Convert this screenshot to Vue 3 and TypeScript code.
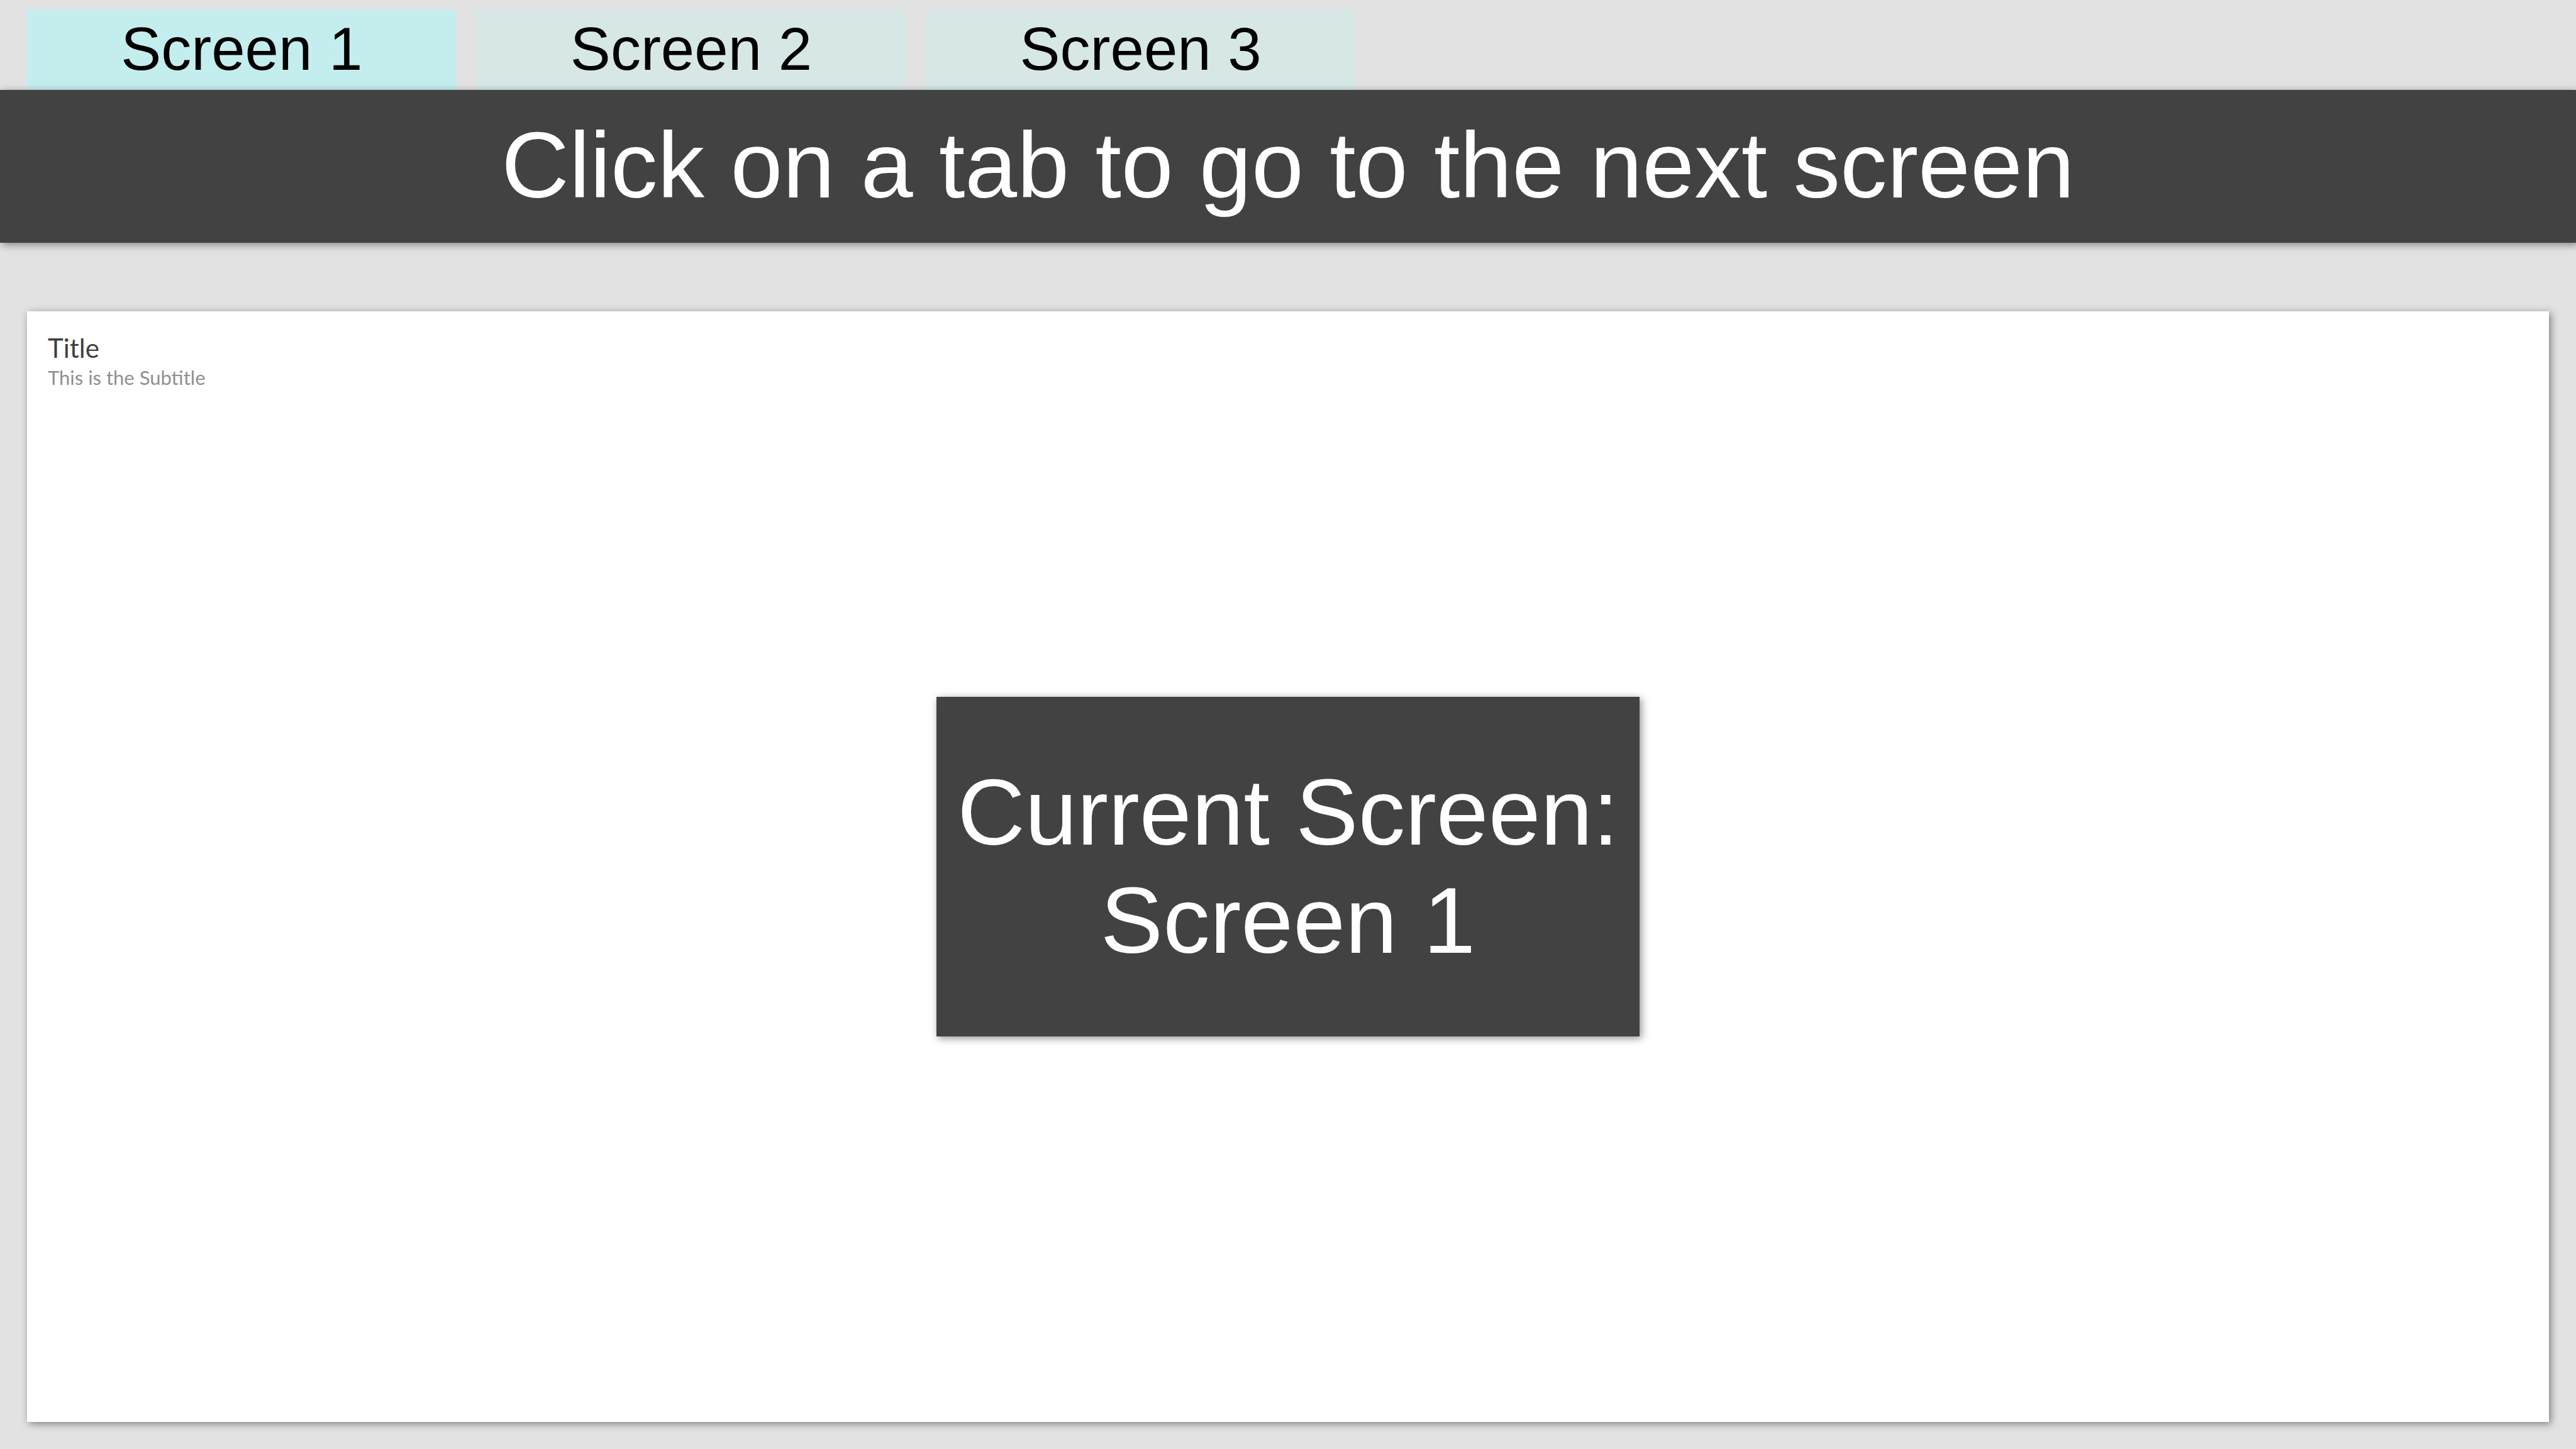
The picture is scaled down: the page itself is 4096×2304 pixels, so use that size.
<script setup lang="ts">
import { computed, ref } from 'vue'

interface Screen {
  id: number
  label: string
}

const screens: Screen[] = [
  { id: 1, label: 'Screen 1' },
  { id: 2, label: 'Screen 2' },
  { id: 3, label: 'Screen 3' },
]

const activeId = ref<number>(1)
const activeLabel = computed<string>(
  () => screens.find((screen) => screen.id === activeId.value)?.label ?? '',
)
</script>

<template>
  <div class="page">
    <nav class="tabs" role="tablist" aria-label="Screens">
      <button
        v-for="screen in screens"
        :key="screen.id"
        type="button"
        role="tab"
        class="tab"
        :class="{ active: screen.id === activeId }"
        :aria-selected="screen.id === activeId"
        @click="activeId = screen.id"
      >
        {{ screen.label }}
      </button>
    </nav>

    <h1 class="banner">Click on a tab to go to the next screen</h1>

    <main class="card">
      <header class="card-header">
        <h2 class="title">Title</h2>
        <p class="subtitle">This is the Subtitle</p>
      </header>
      <div class="current">
        <span>Current Screen:</span>
        <span>{{ activeLabel }}</span>
      </div>
    </main>
  </div>
</template>

<style>
body {
  margin: 0;
  background: #e2e2e2;
}
</style>

<style scoped>
.page {
  --shadow: 3px 3px 12px rgba(0, 0, 0, 0.44);
  box-sizing: border-box;
  display: flex;
  flex-direction: column;
  min-height: 100vh;
  padding-bottom: 43px;
  overflow: hidden;
  background: #e2e2e2;
  font-family: "Liberation Sans", Arial, sans-serif;
}

.tabs {
  display: flex;
  gap: 32px;
  padding: 15px 43px 0;
}

.tab {
  box-sizing: border-box;
  width: calc(100vw / 6);
  margin: 0;
  padding: 8px 0 10px;
  border: 0;
  background: #d6e7e6;
  color: #000;
  font-family: inherit;
  font-size: 96px;
  line-height: 110px;
  text-align: center;
  cursor: pointer;
}

.tab.active {
  background: #c4edee;
}

.banner {
  position: relative;
  margin: 0;
  padding: 34px 0 37px;
  background: #424242;
  box-shadow: var(--shadow);
  color: #fff;
  font-size: 149px;
  font-weight: 400;
  line-height: 172px;
  text-align: center;
}

.card {
  position: relative;
  display: grid;
  flex: 1;
  place-items: center;
  margin: 109px 43px 0;
  background: #fff;
  box-shadow: var(--shadow);
}

.card-header {
  position: absolute;
  top: 32px;
  left: 33px;
  font-family: Lato, sans-serif;
}

.title {
  margin: 0;
  color: #404040;
  font-size: 42px;
  font-weight: 400;
  line-height: 52px;
}

.subtitle {
  margin: 0;
  color: #8f8f8f;
  font-size: 31px;
  line-height: 42px;
}

.current {
  display: flex;
  flex-direction: column;
  align-items: center;
  padding: 98px 33px;
  background: #424242;
  box-shadow: var(--shadow);
  color: #fff;
  font-size: 149px;
  line-height: 172px;
}
</style>
